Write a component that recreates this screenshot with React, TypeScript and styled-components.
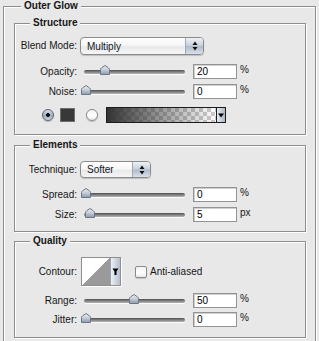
import styled, { createGlobalStyle } from "styled-components";

const GlobalStyle = createGlobalStyle`
  html, body {
    margin: 0;
    padding: 0;
    background: #e8e8e8;
    overflow: hidden;
  }
  body {
    font-family: "Liberation Sans", Arial, sans-serif;
    font-size: 10px;
    color: #161616;
  }
`;

const Panel = styled.section`
  display: flex;
  flex-direction: column;
  margin: 6px 3px 0;
  padding: 0 9px 20px 10px;
  border: 1px solid #8d8d8d;
  box-shadow: inset 1px 1px 0 #fff, 1px 1px 0 #fff;
`;

/* titles are pulled up onto the top border of their box */
const PanelTitle = styled.h1`
  align-self: flex-start;
  margin: -7px 0 0 7px;
  padding: 0 3px;
  font-weight: bold;
  font-size: 10px;
  line-height: 12px;
  background: #e8e8e8;
`;

const Group = styled.div<{ $mt: number; $pb: number }>`
  display: flex;
  flex-direction: column;
  margin-top: ${(p) => p.$mt}px;
  padding-bottom: ${(p) => p.$pb}px;
  border: 1px solid #8d8d8d;
  box-shadow: inset 1px 1px 0 #fff, 1px 1px 0 #fff;
`;

const GroupTitle = styled.h2`
  align-self: flex-start;
  margin: -7px 0 0 15px;
  padding: 0 3px;
  font-weight: bold;
  font-size: 10px;
  line-height: 12px;
  background: #e8e8e8;
`;

const Row = styled.div<{ $mt: number; $h: number }>`
  display: flex;
  align-items: center;
  height: ${(p) => p.$h}px;
  margin-top: ${(p) => p.$mt}px;
`;

const Label = styled.div`
  width: 62px;
  flex: none;
  text-align: right;
  white-space: nowrap;
  line-height: 12px;
`;

const SelectBox = styled.div<{ $w: number }>`
  margin-left: 3px;
  width: ${(p) => p.$w}px;
  height: 100%;
  box-sizing: border-box;
  display: flex;
  border: 1px solid #8a8a8a;
  border-radius: 4px;
  background: linear-gradient(#ffffff, #f7f7f7 45%, #e9e9e9 55%, #f6f6f6);
  box-shadow: 0 1px 1px rgba(0, 0, 0, 0.18);
`;

const SelectText = styled.div`
  flex: 1;
  padding-left: 6px;
  display: flex;
  align-items: center;
  color: #101828;
`;

const Stepper = styled.div`
  width: 17px;
  border-left: 1px solid #a3a9b2;
  border-radius: 0 3px 3px 0;
  background: linear-gradient(#eef2f7, #c7d0db 48%, #aebbca 52%, #d9e1ea);
  display: flex;
  align-items: center;
  justify-content: center;
`;

const Slider = styled.div`
  position: relative;
  margin-left: 7px;
  width: 101px;
  height: 4px;
  border-radius: 2px;
  background: linear-gradient(#4e4e4e, #8e8e8e 60%, #b4b4b4);
  box-shadow: 0 1px 0 #fbfbfb;
`;

const Thumb = styled.svg`
  position: absolute;
  top: -5px;
  width: 10px;
  height: 10px;
`;

const NumberBox = styled.div`
  margin-left: 8px;
  width: 44px;
  height: 15px;
  box-sizing: border-box;
  border: 1px solid #939393;
  box-shadow: inset 1px 1px 0 #cfcfcf;
  background: #fff;
  padding-left: 3px;
  display: flex;
  align-items: center;
  color: #000;
`;

const Unit = styled.span`
  margin-left: 3px;
  align-self: flex-start;
  line-height: 12px;
`;

const Radio = styled.div<{ $checked?: boolean; $ml?: number }>`
  margin-left: ${(p) => p.$ml ?? 0}px;
  width: 12px;
  height: 12px;
  box-sizing: border-box;
  border-radius: 50%;
  border: 1px solid ${(p) => (p.$checked ? "#5b6472" : "#8a8a8a")};
  background: ${(p) =>
    p.$checked
      ? "radial-gradient(circle, #111 0 1.6px, transparent 2.2px), linear-gradient(#d6dde7, #9eabbd 55%, #c9d2de)"
      : "linear-gradient(#f4f4f4, #ffffff 60%, #e6e6e6)"};
  box-shadow: 0 1px 1px rgba(0, 0, 0, 0.2);
`;

const ColorRow = styled.div`
  display: flex;
  align-items: center;
  height: 16px;
  margin-top: 8px;
  margin-left: 27px;
`;

const Swatch = styled.div`
  margin-left: 6px;
  width: 15px;
  height: 14px;
  box-sizing: border-box;
  border: 1px solid #6e6e6e;
  background: #383838;
`;

const GradientPicker = styled.div`
  margin-left: 8px;
  width: 120px;
  height: 16px;
  box-sizing: border-box;
  border: 1px solid #1c1c1c;
  display: flex;
`;

const GradientPreview = styled.div`
  flex: 1;
  background:
    linear-gradient(to right, rgba(51, 51, 51, 1), rgba(51, 51, 51, 0)),
    conic-gradient(#cdcdcd 25%, #fff 0 50%, #cdcdcd 0 75%, #fff 0) 0 0 / 8px 8px;
`;

const DropButton = styled.div`
  width: 8px;
  border-left: 1px solid #1c1c1c;
  background: linear-gradient(to right, #e6ebf1, #aab6c5);
  display: flex;
  align-items: center;
  justify-content: center;
`;

const ContourPicker = styled.div`
  margin-left: 4px;
  width: 40px;
  height: 29px;
  box-sizing: border-box;
  border: 1px solid #8f8f8f;
  display: flex;
  box-shadow: 1px 1px 0 #fff;
`;

const ContourPreview = styled.div`
  flex: 1;
  background: linear-gradient(to bottom right, #ffffff 50%, #9a9a9a 50%);
`;

const ContourDrop = styled.div`
  width: 9px;
  border-left: 1px solid #9aa3ae;
  background: linear-gradient(to right, #eef2f6, #b3bfcd);
  display: flex;
  align-items: center;
  justify-content: center;
`;

const Checkbox = styled.div`
  margin-left: 14px;
  width: 12px;
  height: 12px;
  box-sizing: border-box;
  border: 1px solid #8a8a8a;
  border-radius: 2px;
  background: linear-gradient(#f2f2f2, #ffffff 60%, #e8e8e8);
  box-shadow: 0 1px 1px rgba(0, 0, 0, 0.15);
`;

const CheckLabel = styled.span`
  margin-left: 3px;
`;

const StepperArrows = () => (
  <svg width="6" height="10" viewBox="0 0 6 10">
    <path d="M3 0.5 L5.5 4 H0.5 Z" fill="#111" />
    <path d="M3 9.5 L5.5 6 H0.5 Z" fill="#111" />
  </svg>
);

const SliderThumb = ({ pos }: { pos: number }) => (
  <Thumb viewBox="0 0 10 10" style={{ left: -3 + pos * 96 }}>
    <defs>
      <linearGradient id="thumbFill" x1="0" y1="0" x2="0" y2="1">
        <stop offset="0" stopColor="#eef1f5" />
        <stop offset="0.5" stopColor="#c3ccd7" />
        <stop offset="1" stopColor="#8d9aab" />
      </linearGradient>
    </defs>
    <path
      d="M0.5 9.5 V4.6 Q0.5 3.6 1.6 2.8 L5 0.5 L8.4 2.8 Q9.5 3.6 9.5 4.6 V9.5 Z"
      fill="url(#thumbFill)"
      stroke="#6c7685"
      strokeWidth="1"
    />
  </Thumb>
);

const SliderRow = ({
  label,
  value,
  pos,
  unit,
  mt,
}: {
  label: string;
  value: string;
  pos: number;
  unit: string;
  mt: number;
}) => (
  <Row $mt={mt} $h={15}>
    <Label>{label}</Label>
    <Slider>
      <SliderThumb pos={pos} />
    </Slider>
    <NumberBox>{value}</NumberBox>
    <Unit>{unit}</Unit>
  </Row>
);

export default function App() {
  return (
    <>
      <GlobalStyle />
      <Panel>
        <PanelTitle>Outer Glow</PanelTitle>

        <Group $mt={11} $pb={11}>
          <GroupTitle>Structure</GroupTitle>
          <Row $mt={8} $h={18}>
            <Label>Blend Mode:</Label>
            <SelectBox $w={124}>
              <SelectText>Multiply</SelectText>
              <Stepper>
                <StepperArrows />
              </Stepper>
            </SelectBox>
          </Row>
          <SliderRow label="Opacity:" value="20" pos={0.2} unit="%" mt={9} />
          <SliderRow label="Noise:" value="0" pos={0} unit="%" mt={5} />
          <ColorRow>
            <Radio $checked />
            <Swatch />
            <Radio $ml={11} />
            <GradientPicker>
              <GradientPreview />
              <DropButton>
                <svg width="6" height="5" viewBox="0 0 6 5">
                  <path d="M0 0.5 H6 L3 4.5 Z" fill="#000" />
                </svg>
              </DropButton>
            </GradientPicker>
          </ColorRow>
        </Group>

        <Group $mt={10} $pb={9}>
          <GroupTitle>Elements</GroupTitle>
          <Row $mt={10} $h={17}>
            <Label>Technique:</Label>
            <SelectBox $w={71}>
              <SelectText>Softer</SelectText>
              <Stepper>
                <StepperArrows />
              </Stepper>
            </SelectBox>
          </Row>
          <SliderRow label="Spread:" value="0" pos={0} unit="%" mt={9} />
          <SliderRow label="Size:" value="5" pos={0.042} unit="px" mt={5} />
        </Group>

        <Group $mt={9} $pb={10}>
          <GroupTitle>Quality</GroupTitle>
          <Row $mt={10} $h={29}>
            <Label>Contour:</Label>
            <ContourPicker>
              <ContourPreview />
              <ContourDrop>
                <svg width="7" height="9" viewBox="0 0 7 9">
                  <path d="M0.5 1.5 H6.5 L4.5 4.5 V8 H2.5 V4.5 Z" fill="#000" />
                </svg>
              </ContourDrop>
            </ContourPicker>
            <Checkbox />
            <CheckLabel>Anti-aliased</CheckLabel>
          </Row>
          <SliderRow label="Range:" value="50" pos={0.5} unit="%" mt={7} />
          <SliderRow label="Jitter:" value="0" pos={0} unit="%" mt={4} />
        </Group>
      </Panel>
    </>
  );
}
